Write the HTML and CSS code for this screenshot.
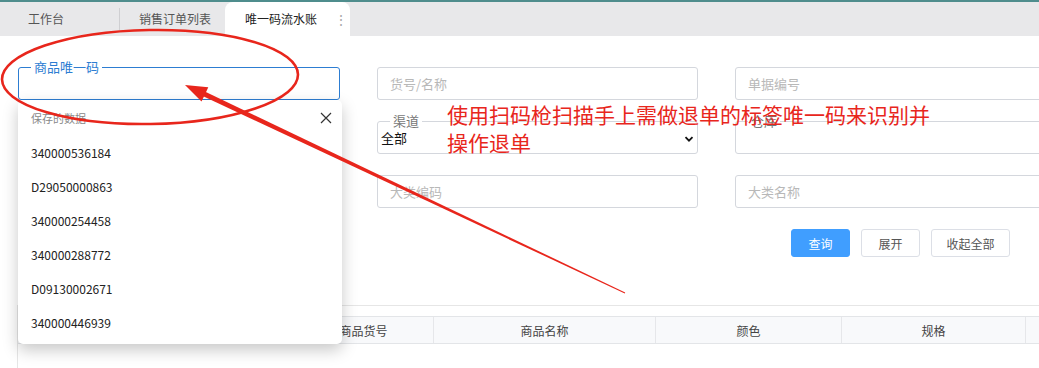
FILE: index.html
```html
<!DOCTYPE html>
<html lang="zh-CN">
  <head>
    <meta charset="UTF-8" />
    <meta name="viewport" content="width=device-width, initial-scale=1.0" />
    <title>唯一码流水账</title>
    <link rel="stylesheet" href="styles.css">
  </head>
  <body>
    <div class="tabbar">
      <div class="tab first">工作台</div>
      <div class="tab-sep"></div>
      <div class="tab second">销售订单列表</div>
      <div class="tab active">唯一码流水账<span class="tab-more">⋮</span></div>
      <div class="tab-rest"></div>
    </div>

    <div class="main">
      <div class="grid">
        <div class="field focus">
          <span class="legend">商品唯一码</span>
        </div>
        <div class="field"><span class="ph">货号/名称</span></div>
        <div class="field"><span class="ph">单据编号</span></div>

        <div class="field hidden-cell"></div>
        <div class="field">
          <span class="legend gray">渠道</span>
          <span class="val">全部</span>
          <svg class="chev" width="10" height="10" viewBox="0 0 10 10"><path d="M1.5 3.2 L5 6.7 L8.5 3.2" fill="none" stroke="#111" stroke-width="1.8"/></svg>
        </div>
        <div class="field"><span class="legend gray">仓库</span></div>

        <div class="field hidden-cell"></div>
        <div class="field"><span class="ph">大类编码</span></div>
        <div class="field"><span class="ph">大类名称</span></div>
      </div>

      <div class="actions">
        <button class="btn primary">查询</button>
        <button class="btn">展开</button>
        <button class="btn wide">收起全部</button>
      </div>

      <div class="table-wrap">
        <div class="thead">
          <div class="th c1"></div>
          <div class="th c2"></div>
          <div class="th c3">商品货号</div>
          <div class="th c4">商品名称</div>
          <div class="th c5">颜色</div>
          <div class="th c6">规格</div>
          <div class="th c7"></div>
        </div>
      </div>
    </div>

    <div class="dropdown">
      <div class="dd-head">
        <span>保存的数据</span>
        <svg width="12" height="12" viewBox="0 0 12 12"><path d="M1 1 L11 11 M11 1 L1 11" stroke="#333" stroke-width="1.2"/></svg>
      </div>
      <div class="dd-item">340000536184</div>
      <div class="dd-item">D29050000863</div>
      <div class="dd-item">340000254458</div>
      <div class="dd-item">340000288772</div>
      <div class="dd-item">D09130002671</div>
      <div class="dd-item">340000446939</div>
    </div>

    <!-- annotation drawn over the screenshot -->
    <svg class="mark" width="1039" height="368" viewBox="0 0 1039 368">
      <ellipse cx="150" cy="77" rx="148" ry="47" fill="none" stroke="#e8261c" stroke-width="2.6" transform="rotate(-1 150 77)"/>
      <polygon points="185,85 208.3,87.2 204.9,94.4 201.5,101.6" fill="#e8261c"/>
      <polygon points="200.6,89.5 625.2,292.5 624.8,293.5 198.4,94.1" fill="#e8261c"/>
    </svg>
    <div class="note">使用扫码枪扫描手上需做退单的标签唯一码来识别并<br>操作退单</div>
  </body>
</html>
```

FILE: styles.css
```css
html,
body {
  margin: 0;
  padding: 0;
  width: 1039px;
  height: 368px;
  overflow: hidden;
  background: #fff;
  font-family: "Noto Sans CJK SC", sans-serif;
  font-size: 12px;
  color: #333;
  position: relative;
}

.tabbar {
  display: flex;
  height: 36px;
  box-sizing: border-box;
  border-top: 2px solid #4f8d8d;
  background: #e8e8ea;
}

.tab {
  display: flex;
  align-items: center;
  color: #555;
  white-space: nowrap;
  padding-bottom: 1px;
}

.tab.first {
  padding-left: 28px;
  padding-right: 55px;
}

.tab-sep {
  width: 1px;
  height: 22px;
  margin-top: 6px;
  background: #cfcfd2;
}

.tab.second {
  padding-left: 19px;
  padding-right: 14px;
}

.tab.active {
  background: #fff;
  color: #222;
  border-radius: 8px 8px 0 0;
  padding-left: 20px;
  width: 125px;
  box-sizing: border-box;
}

.tab-more {
  margin-left: 17px;
  color: #aaa;
  font-size: 14px;
}

.tab-rest {
  flex: 1;
  background: #e8e8ea;
  border-bottom-left-radius: 7px;
}

.main {
  padding-top: 31px;
}

.grid {
  display: grid;
  grid-template-columns: 322px 321px 322px;
  grid-auto-rows: 33px;
  column-gap: 37px;
  row-gap: 21px;
  padding-left: 18px;
}

.field {
  position: relative;
  border: 1px solid #d4d7dd;
  border-radius: 3px;
  display: flex;
  align-items: center;
  padding-left: 12px;
  font-size: 13px;
}

.field.focus {
  border-color: #2d7dd2;
}

.field.hidden-cell {
  visibility: hidden;
}

.ph {
  color: #b8b8b8;
}

.val {
  color: #111;
  margin-left: -9px;
}

.chev {
  position: absolute;
  right: 3px;
  top: 12px;
}

.legend {
  position: absolute;
  left: 12px;
  top: -9px;
  padding: 0 3px;
  background: #fff;
  line-height: 16px;
  color: #2d7dd2;
  font-size: 13px;
}

.legend.gray {
  color: #777;
}

.actions {
  display: flex;
  justify-content: flex-end;
  gap: 11px;
  margin-top: 21px;
  margin-right: 29px;
}

.btn {
  height: 28px;
  width: 59px;
  border: 1px solid #dcdfe6;
  border-radius: 3px;
  background: #fff;
  color: #555;
  font-family: "Noto Sans CJK SC", sans-serif;
  font-size: 12px;
  padding: 0;
}

.btn.wide {
  width: 79px;
}

.btn.primary {
  background: #409eff;
  border-color: #409eff;
  color: #fff;
}

.table-wrap {
  margin-top: 48px;
  margin-left: 17px;
  border-top: 1px solid #e6e6e6;
  border-left: 1px solid #e6e6e6;
  padding-top: 10px;
  height: 52px;
}

.thead {
  display: flex;
  height: 28px;
  box-sizing: border-box;
  border-top: 1px solid #e3e5e8;
  border-bottom: 1px solid #e3e5e8;
  background: #f8f9fb;
}

.th {
  display: flex;
  align-items: center;
  justify-content: center;
  border-right: 1px solid #e6e7ea;
  color: #444;
  flex: none;
  box-sizing: border-box;
}

.c1 { width: 123px; }
.c2 { width: 153px; }
.c3 { width: 140px; }
.c4 { width: 222px; }
.c5 { width: 186px; }
.c6 { width: 184px; }
.c7 { width: 13px; border-right: 0; }

.dropdown {
  position: absolute;
  left: 18px;
  top: 100px;
  width: 324px;
  height: 244px;
  box-sizing: border-box;
  background: #fff;
  border-radius: 5px;
  box-shadow: 0 6px 16px rgba(0, 0, 0, 0.22);
  padding-bottom: 4px;
}

.dd-head {
  display: flex;
  justify-content: space-between;
  align-items: center;
  height: 36px;
  padding: 0 10px 0 13px;
  color: #888;
  font-size: 11px;
}

.dd-item {
  height: 34px;
  line-height: 34px;
  padding-left: 13px;
  color: #222;
  font-size: 12px;
}

.mark {
  position: absolute;
  left: 0;
  top: 0;
  pointer-events: none;
}

.note {
  position: absolute;
  left: 447px;
  top: 100px;
  color: #e8261c;
  font-size: 21px;
  line-height: 28px;
  white-space: nowrap;
}
```
